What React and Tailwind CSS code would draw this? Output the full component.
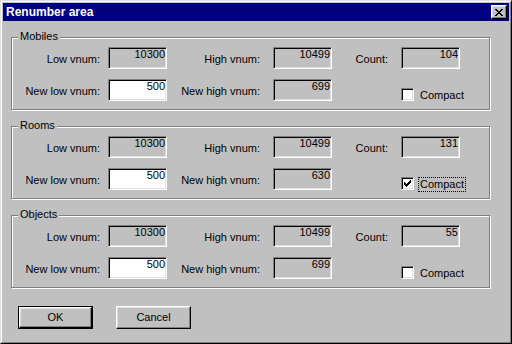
import React from "react";

const font = { fontFamily: '"Liberation Sans", Arial, sans-serif' };
const sunken =
  "border border-t-[#808080] border-l-[#808080] border-b-white border-r-white shadow-[inset_1px_1px_0_#000,inset_-1px_-1px_0_#dfdfdf]";

function Box({ value, white }) {
  return (
    <div
      className={`w-[59px] h-[22px] shrink-0 ${sunken} ${
        white ? "bg-white" : "bg-[#c0c0c0]"
      } text-right pr-[1px] pt-0 leading-[13px]`}
    >
      {value}
    </div>
  );
}

function Label({ w, ml, children }) {
  return (
    <div className={`${w} ${ml} shrink-0 text-right pt-[6px] leading-[13px] whitespace-nowrap`}>
      {children}
    </div>
  );
}

function Check() {
  return (
    <svg width="7" height="7" viewBox="0 0 7 7" shapeRendering="crispEdges" className="block">
      <path
        d="M6 0h1v1h-1z M5 1h2v1h-2z M0 2h1v1h-1z M4 2h3v1h-3z M0 3h2v1h-2z M3 3h3v1h-3z M0 4h5v1h-5z M1 5h3v1h-3z M2 6h1v1h-1z"
        fill="#000"
      />
    </svg>
  );
}

function Group({ title, low, high, count, newLow, newHigh, checked, focused }) {
  return (
    <div className="relative w-[479px] h-[73px] border border-[#808080] shadow-[1px_1px_0_#fff,inset_1px_1px_0_#fff] pt-[9px]">
      <div className="absolute left-[6px] top-[-8px] px-[2px] bg-[#c0c0c0] leading-[13px]">{title}</div>
      <div className="flex h-[22px]">
        <Label w="w-[88px]" ml="">Low vnum:</Label>
        <div className="ml-[8px]">
          <Box value={low} />
        </div>
        <Label w="w-[93px]" ml="">High vnum:</Label>
        <div className="ml-[13px]">
          <Box value={high} />
        </div>
        <Label w="w-[56px]" ml="">Count:</Label>
        <div className="ml-[13px]">
          <Box value={count} />
        </div>
      </div>
      <div className="flex h-[22px] mt-[10px]">
        <Label w="w-[88px]" ml="">New low vnum:</Label>
        <div className="ml-[8px]">
          <Box value={newLow} white />
        </div>
        <Label w="w-[93px]" ml="">New high vnum:</Label>
        <div className="ml-[13px]">
          <Box value={newHigh} />
        </div>
        <div className="ml-[69px] mt-[9px] flex items-start">
          <div className={`w-[13px] h-[13px] ${sunken} bg-white flex items-center justify-center`}>
            {checked && <Check />}
          </div>
          <div
            className={`ml-[4px] px-[1px] leading-[13px] border border-dotted ${
              focused ? "border-black" : "border-transparent"
            }`}
          >
            Compact
          </div>
        </div>
      </div>
    </div>
  );
}

function Button({ children, def }) {
  const inner = (
    <div className="w-full h-full flex items-center justify-center border border-t-white border-l-white border-b-black border-r-black shadow-[inset_-1px_-1px_0_#808080,inset_1px_1px_0_#dfdfdf]">
      {children}
    </div>
  );
  return (
    <div className={`w-[75px] h-[23px] ${def ? "border border-black" : ""}`}>{inner}</div>
  );
}

export default function App() {
  return (
    <div
      className="w-[512px] h-[344px] bg-[#c0c0c0] text-[11px] text-black border border-t-[#dfdfdf] border-l-[#dfdfdf] border-b-black border-r-black"
      style={font}
    >
      <div className="w-full h-full border border-t-white border-l-white border-b-[#808080] border-r-[#808080] p-[1px] flex flex-col">
        <div className="h-[18px] bg-[#000080] flex items-center justify-between pl-[3px] pr-[2px] shrink-0">
          <span className="text-white font-bold text-[12px] leading-[18px]">Renumber area</span>
          <div className="w-[16px] h-[14px] bg-[#c0c0c0] border border-t-white border-l-white border-b-black border-r-black shadow-[inset_-1px_-1px_0_#808080,inset_1px_1px_0_#dfdfdf] flex items-center justify-center">
            <svg width="8" height="7" viewBox="0 0 8 7" shapeRendering="crispEdges" className="block">
              <path
                d="M0 0h2v1h-2z M6 0h2v1h-2z M1 1h2v1h-2z M5 1h2v1h-2z M2 2h4v1h-4z M3 3h2v1h-2z M2 4h4v1h-4z M1 5h2v1h-2z M5 5h2v1h-2z M0 6h2v1h-2z M6 6h2v1h-2z"
                fill="#000"
              />
            </svg>
          </div>
        </div>
        <div className="flex flex-col pt-[16px] px-[8px] gap-[16px]">
          <Group title="Mobiles" low="10300" high="10499" count="104" newLow="500" newHigh="699" />
          <Group title="Rooms" low="10300" high="10499" count="131" newLow="500" newHigh="630" checked focused />
          <Group title="Objects" low="10300" high="10499" count="55" newLow="500" newHigh="699" />
          <div className="flex ml-[7px] mt-[2px] gap-[23px]">
            <Button def>OK</Button>
            <Button>Cancel</Button>
          </div>
        </div>
      </div>
    </div>
  );
}
